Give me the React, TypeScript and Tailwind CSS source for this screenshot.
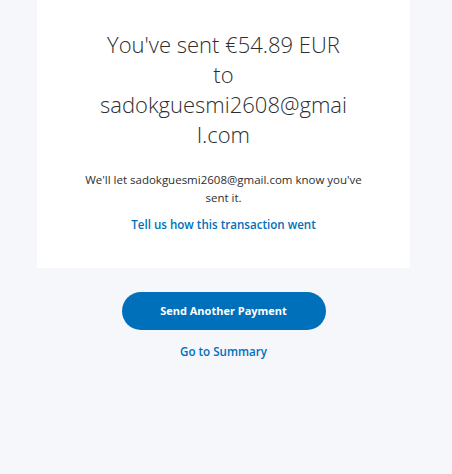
export default function App() {
  return (
    <div
      className="min-h-[474px] w-full bg-[#f5f7fa] text-[#2c2e2f]"
      style={{ fontFamily: '"Open Sans", "Liberation Sans", sans-serif' }}
    >
      <div className="ml-[37px] flex h-[268px] w-[373px] flex-col items-center bg-white pt-[29px]">
        <h1 className="w-[250px] break-words text-center text-[22px] font-light leading-[30px]">
          You've sent €54.89 EUR to sadokguesmi2608@gmail.com
        </h1>
        <p className="mt-[22px] w-[290px] text-center text-[11.5px] leading-[18px]">
          We'll let sadokguesmi2608@gmail.com know you've sent it.
        </p>
        <a href="#" className="mt-[9px] text-[11.6px] font-semibold text-[#0070ba]">
          Tell us how this transaction went
        </a>
      </div>
      <div className="ml-[37px] mt-[24px] flex w-[373px] flex-col items-center">
        <button className="h-[38px] w-[204px] rounded-full bg-[#0070ba] text-[11px] font-bold text-white">
          Send Another Payment
        </button>
        <a href="#" className="mt-[13px] text-[11.6px] font-semibold text-[#0070ba]">
          Go to Summary
        </a>
      </div>
    </div>
  );
}
